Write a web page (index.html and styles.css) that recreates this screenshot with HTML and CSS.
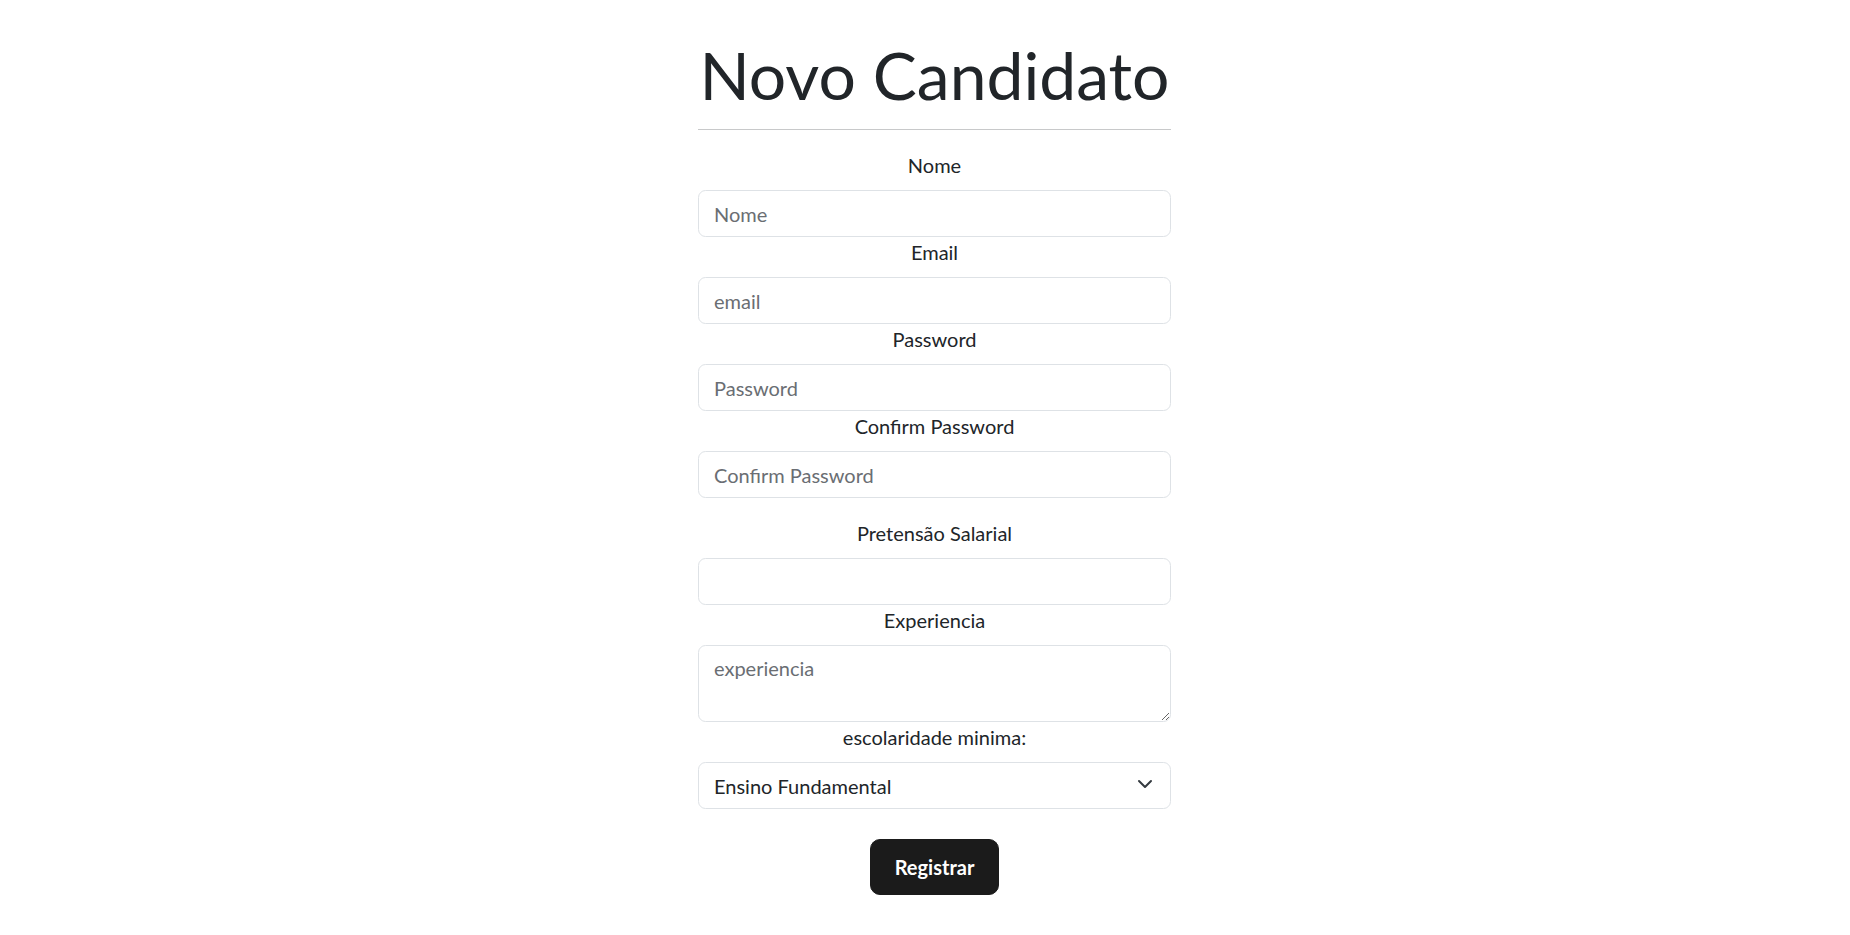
FILE: index.html
```html
<!DOCTYPE html>
<html lang="pt">
<head>
<meta charset="utf-8">
<title>Novo Candidato</title>
<link rel="stylesheet" href="styles.css">
</head>
<body>
<main class="page">
  <div class="panel">
    <h1 class="title">Novo Candidato</h1>
    <hr class="rule">
    <form class="form">
      <div class="field">
        <label class="label" for="nome">Nome</label>
        <input class="control" id="nome" type="text" placeholder="Nome">
      </div>
      <div class="field">
        <label class="label" for="email">Email</label>
        <input class="control" id="email" type="email" placeholder="email">
      </div>
      <div class="field">
        <label class="label" for="pw">Password</label>
        <input class="control" id="pw" type="password" placeholder="Password">
      </div>
      <div class="field">
        <label class="label" for="pw2">Confirm Password</label>
        <input class="control" id="pw2" type="password" placeholder="Confirm Password">
      </div>
      <div class="field field-spaced">
        <label class="label" for="sal">Pretensão Salarial</label>
        <input class="control" id="sal" type="number">
      </div>
      <div class="field">
        <label class="label" for="exp">Experiencia</label>
        <textarea class="control area" id="exp" rows="2" placeholder="experiencia"></textarea>
      </div>
      <div class="field">
        <label class="label" for="esc">escolaridade minima:</label>
        <div class="select-wrap">
          <select class="control select" id="esc">
            <option>Ensino Fundamental</option>
            <option>Ensino Médio</option>
            <option>Ensino Superior</option>
          </select>
          <svg class="chevron" width="16" height="16" viewBox="0 0 16 16" aria-hidden="true">
            <path d="M2 5l6 6 6-6" fill="none" stroke="#343a40" stroke-width="2" stroke-linecap="round" stroke-linejoin="round"/>
          </svg>
        </div>
      </div>
      <div class="actions">
        <button class="btn" type="submit">Registrar</button>
      </div>
    </form>
  </div>
</main>
</body>
</html>
```

FILE: styles.css
```css
* {
  box-sizing: border-box;
}

html, body {
  margin: 0;
  padding: 0;
  background: #ffffff;
}

body {
  font-family: Lato, "Open Sans", "Liberation Sans", sans-serif;
  color: #212529;
}

.page {
  display: flex;
  justify-content: center;
  padding-left: 19px;
}

.panel {
  width: 473px;
}

.title {
  margin: 35px 0 0 0;
  font-size: 66px;
  line-height: 80px;
  font-weight: 400;
  text-align: center;
  color: #212529;
}

.rule {
  margin: 14px 0 0 0;
  border: 0;
  border-top: 1px solid #c8c9ca;
  height: 0;
}

.form {
  display: flex;
  flex-direction: column;
  margin-top: 20px;
}

.field {
  display: flex;
  flex-direction: column;
}

.field-spaced {
  margin-top: 20px;
}

.label {
  display: block;
  font-size: 20px;
  line-height: 30px;
  margin-bottom: 10px;
  text-align: center;
  color: #212529;
}

.control {
  display: block;
  width: 100%;
  height: 47px;
  margin: 0;
  padding: 0 15px;
  font-family: inherit;
  font-size: 20px;
  line-height: 30px;
  color: #212529;
  background: #ffffff;
  border: 1px solid #dee2e6;
  border-radius: 7.5px;
  outline: none;
}

.control::placeholder {
  color: #6a6e73;
  opacity: 1;
}

.area {
  height: 77px;
  padding: 7px 15px;
  resize: vertical;
}

.select-wrap {
  position: relative;
}

.select {
  appearance: none;
  -webkit-appearance: none;
  padding-right: 45px;
}

.chevron {
  position: absolute;
  right: 18px;
  top: 14px;
  pointer-events: none;
}

.actions {
  display: flex;
  justify-content: center;
  margin-top: 30px;
}

.btn {
  height: 56px;
  padding: 0 24px;
  font-family: inherit;
  font-size: 20px;
  font-weight: 700;
  color: #ffffff;
  background: #1b1b1b;
  border: 1px solid #1b1b1b;
  border-radius: 10px;
  cursor: pointer;
}
```
